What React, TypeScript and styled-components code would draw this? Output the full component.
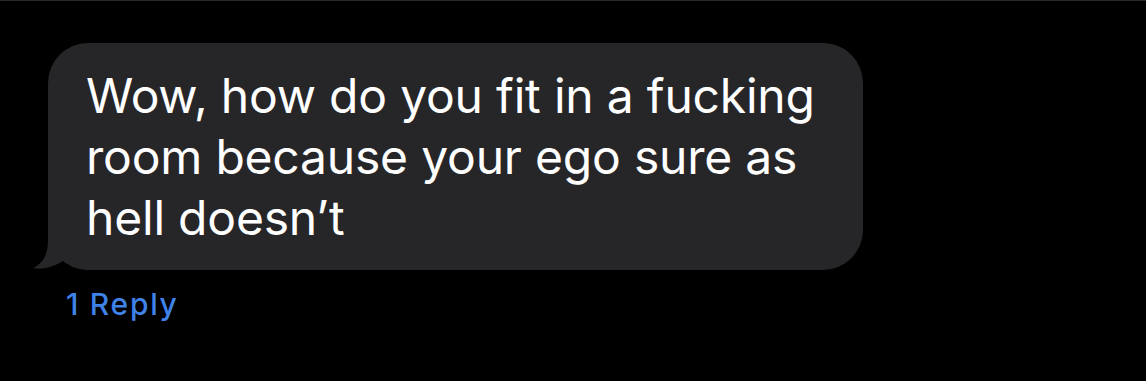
import React from "react";
import styled, { createGlobalStyle } from "styled-components";

const Global = createGlobalStyle`
  html, body {
    margin: 0;
    padding: 0;
    background: #000;
  }
  body {
    font-family: Inter, "Noto Sans", "Liberation Sans", sans-serif;
    -webkit-font-smoothing: antialiased;
  }
`;

const Screen = styled.div`
  width: 1146px;
  height: 381px;
  box-sizing: border-box;
  background: #000;
  border-top: 1px solid #2a2a2c;
  padding: 42px 0 0 48px;
  display: flex;
  flex-direction: column;
  align-items: flex-start;
`;

const Bubble = styled.div`
  position: relative;
  width: 815px;
  box-sizing: border-box;
  background: #262629;
  border-radius: 40px;
  padding: 22px 20px 22px 38px;
  color: #fff;
  font-size: 48px;
  line-height: 61px;
  font-weight: 400;
  letter-spacing: -0.2px;
`;

const Text = styled.div`
  position: relative;
  z-index: 1;
`;

const Line = styled.span`
  display: block;
  white-space: nowrap;
`;

const Tail = styled.svg`
  position: absolute;
  z-index: 0;
  left: -18px;
  bottom: 0;
  width: 78px;
  height: 60px;
  overflow: visible;
`;

const Reply = styled.div`
  margin: 16px 0 0 18px;
  color: #3f82e8;
  font-size: 30px;
  line-height: 36px;
  font-weight: 500;
  letter-spacing: 1.7px;
`;

export default function App() {
  return (
    <>
      <Global />
      <Screen>
        <Bubble>
          <Tail viewBox="-18 -60 78 60" aria-hidden="true">
            <path
              d="M0,-60 L0,-30 C0,-14 -6,-6 -15,-2 C-6,0 8,-3 19,-12 C26,-4 32,0 42,0 L60,0 L60,-60 Z"
              fill="#262629"
            />
          </Tail>
          <Text>
            <Line>Wow, how do you fit in a fucking</Line>
            <Line>room because your ego sure as</Line>
            <Line>hell doesn’t</Line>
          </Text>
        </Bubble>
        <Reply>1 Reply</Reply>
      </Screen>
    </>
  );
}
